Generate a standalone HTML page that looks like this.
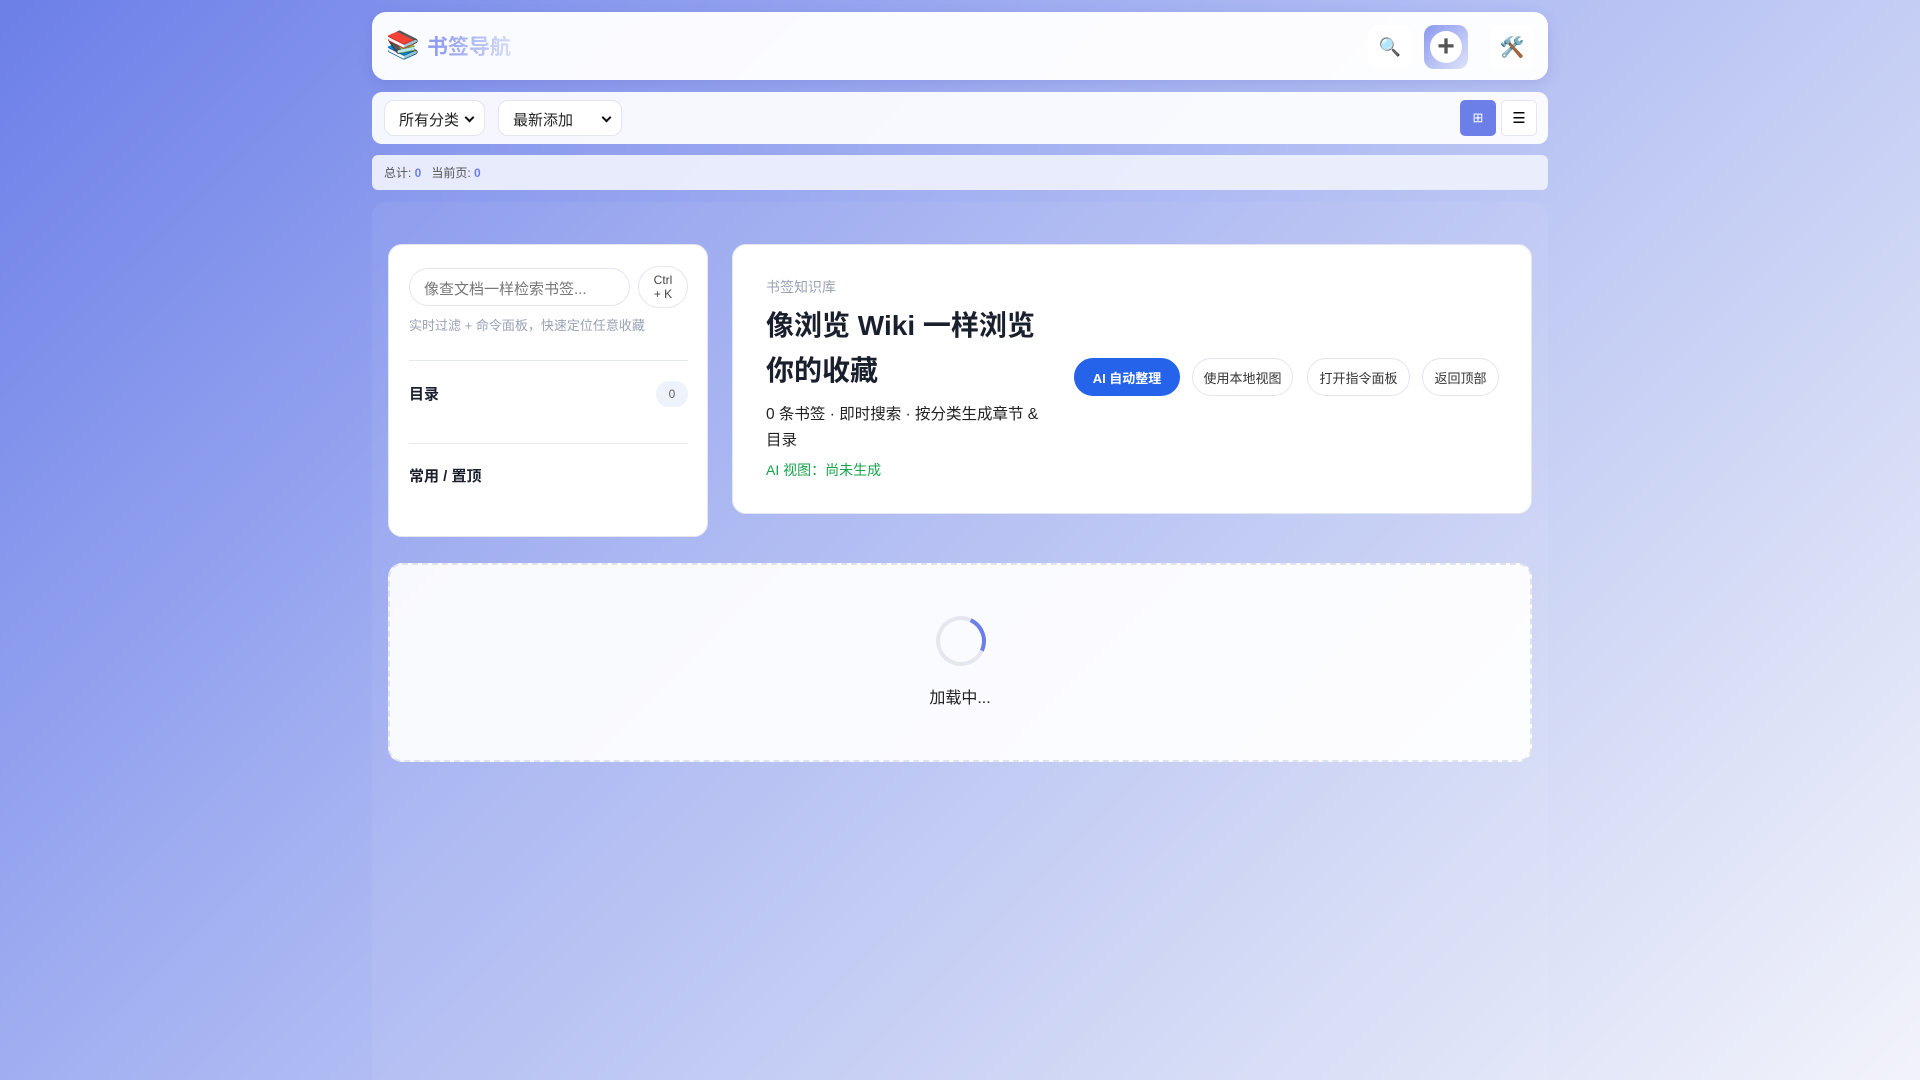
<!DOCTYPE html>
<html><head><meta charset="utf-8"><style>
*{box-sizing:border-box;margin:0;padding:0}
html{width:1920px;height:1080px;overflow:hidden}
body{width:1920px;height:1080px;overflow:hidden;font-family:"Liberation Sans","Noto Sans CJK SC",sans-serif;background:linear-gradient(135deg,#6c7fe8 0%,#a6b3f2 40%,#ccd4f5 70%,#f2f3fa 100%);position:relative}
.hdr{position:absolute;left:372px;top:12px;width:1176px;height:68px;background:rgba(255,255,255,.96);border-radius:14px;box-shadow:0 4px 14px rgba(60,70,160,.15)}
.logo{position:absolute;left:14px;top:17px;font-size:27px;line-height:32px}
.title{position:absolute;left:55px;top:19px;font-size:21px;font-weight:bold;background:linear-gradient(90deg,#8795ee,#d6dcf8);-webkit-background-clip:text;color:transparent}
.ib{position:absolute;top:13px;width:44px;height:44px;border-radius:10px;display:flex;align-items:center;justify-content:center;font-size:20px}
.tb{position:absolute;left:372px;top:92px;width:1176px;height:52px;background:rgba(255,255,255,.92);border-radius:10px}
.sel{position:absolute;top:8px;height:36px;background:#fff;border:1px solid #e3e6ee;border-radius:10px;font-size:15px;padding:8px 0 0 14px;color:#222}
.sel:after{content:"";position:absolute;right:11px;top:13px;width:5px;height:5px;border-right:2px solid #111;border-bottom:2px solid #111;transform:rotate(45deg)}
.st{position:absolute;left:372px;top:155px;width:1176px;height:35px;background:rgba(236,239,252,.95);border-radius:6px;font-size:12px;color:#555;padding:9px 12px}
.st b{color:#6c7fe8}
.wrap{position:absolute;left:372px;top:202px;width:1176px;height:878px;background:rgba(255,255,255,.06);border-radius:14px 14px 0 0}
.card{position:absolute;background:#fff;border-radius:14px;border:1px solid #e4e7f0}
.pill{position:absolute;top:358px;height:38px;border:1px solid #e3e6ee;border-radius:19px;font-size:13px;color:#333;display:flex;align-items:center;justify-content:center;background:#fff}
</style></head><body>
<div class="hdr">
<div class="logo">📚</div><div class="title">书签导航</div>
<div class="ib" style="left:996px;background:#fff;font-size:18px">🔍</div>
<div class="ib" style="left:1052px;background:linear-gradient(135deg,#8a98ee,#dfe3fa)"><span style="width:32px;height:32px;border-radius:50%;background:#fff;display:flex;align-items:center;justify-content:center;font-size:30px;font-weight:bold;color:#555">+</span></div>
<div class="ib" style="left:1118px;background:#fff">🛠️</div>
</div>
<div class="tb">
<div class="sel" style="left:12px;width:101px">所有分类</div>
<div class="sel" style="left:126px;width:124px">最新添加</div>
<div style="position:absolute;left:1088px;top:8px;width:36px;height:36px;background:#6c7fe8;border-radius:5px;color:#fff;font-size:13px;display:flex;align-items:center;justify-content:center">⊞</div>
<div style="position:absolute;left:1129px;top:8px;width:36px;height:36px;background:#fff;border:1px solid #e3e6ee;border-radius:5px;font-size:15px;display:flex;align-items:center;justify-content:center">☰</div>
</div>
<div class="st">总计: <b>0</b> &nbsp; 当前页: <b>0</b></div>
<div class="wrap"></div>
<div class="card" style="left:388px;top:244px;width:320px;height:293px">
<div style="position:absolute;left:20px;top:23px;width:221px;height:38px;border:1px solid #e3e6ee;border-radius:19px;font-size:15px;color:#777;padding:9px 14px">像查文档一样检索书签...</div>
<div style="position:absolute;left:249px;top:21px;width:50px;height:42px;border:1px solid #e3e6ee;border-radius:21px;font-size:12px;color:#444;text-align:center;line-height:14px;padding-top:6px">Ctrl<br>+ K</div>
<div style="position:absolute;left:20px;top:70px;font-size:13px;color:#9aa3b5">实时过滤 + 命令面板，快速定位任意收藏</div>
<div style="position:absolute;left:20px;top:115px;width:279px;border-top:1px solid #e5e8ef"></div>
<div style="position:absolute;left:20px;top:138px;font-size:15px;font-weight:bold;color:#1a1f2e">目录</div>
<div style="position:absolute;left:267px;top:136px;width:32px;height:26px;border-radius:13px;background:#eef2fb;font-size:12px;color:#666;text-align:center;line-height:26px">0</div>
<div style="position:absolute;left:20px;top:198px;width:279px;border-top:1px solid #e5e8ef"></div>
<div style="position:absolute;left:20px;top:220px;font-size:15px;font-weight:bold;color:#1a1f2e">常用 / 置顶</div>
</div>
<div class="card" style="left:732px;top:244px;width:800px;height:270px">
<div style="position:absolute;left:33px;top:32px;font-size:14px;color:#9aa3b5">书签知识库</div>
<div style="position:absolute;left:33px;top:58px;width:290px;font-size:28px;font-weight:bold;color:#1a1f2e;line-height:45px">像浏览 Wiki 一样浏览你的收藏</div>
<div style="position:absolute;left:33px;top:157px;width:290px;font-size:15.5px;color:#222;line-height:26px">0 条书签 · 即时搜索 · 按分类生成章节 &amp; 目录</div>
<div style="position:absolute;left:33px;top:215px;font-size:14px;color:#16a34a">AI 视图：尚未生成</div>
</div>
<div class="pill" style="left:1074px;width:106px;background:#2563eb;border-color:#2563eb;color:#fff;font-weight:bold">AI 自动整理</div>
<div class="pill" style="left:1192px;width:101px">使用本地视图</div>
<div class="pill" style="left:1307px;width:103px">打开指令面板</div>
<div class="pill" style="left:1422px;width:77px">返回顶部</div>
<div class="card" style="left:388px;top:563px;width:1144px;height:199px;border:2px dashed #dfe3ee;background:rgba(255,255,255,.93)">
<div style="position:absolute;left:546px;top:51px;width:50px;height:50px;border-radius:50%;border:4px solid #e5e7ee;border-right-color:#6c7fe8;transform:rotate(-20deg)"></div>
<div style="position:absolute;left:0;width:100%;top:119px;text-align:center;font-size:16px;color:#222">加载中...</div>
</div>
</body></html>
